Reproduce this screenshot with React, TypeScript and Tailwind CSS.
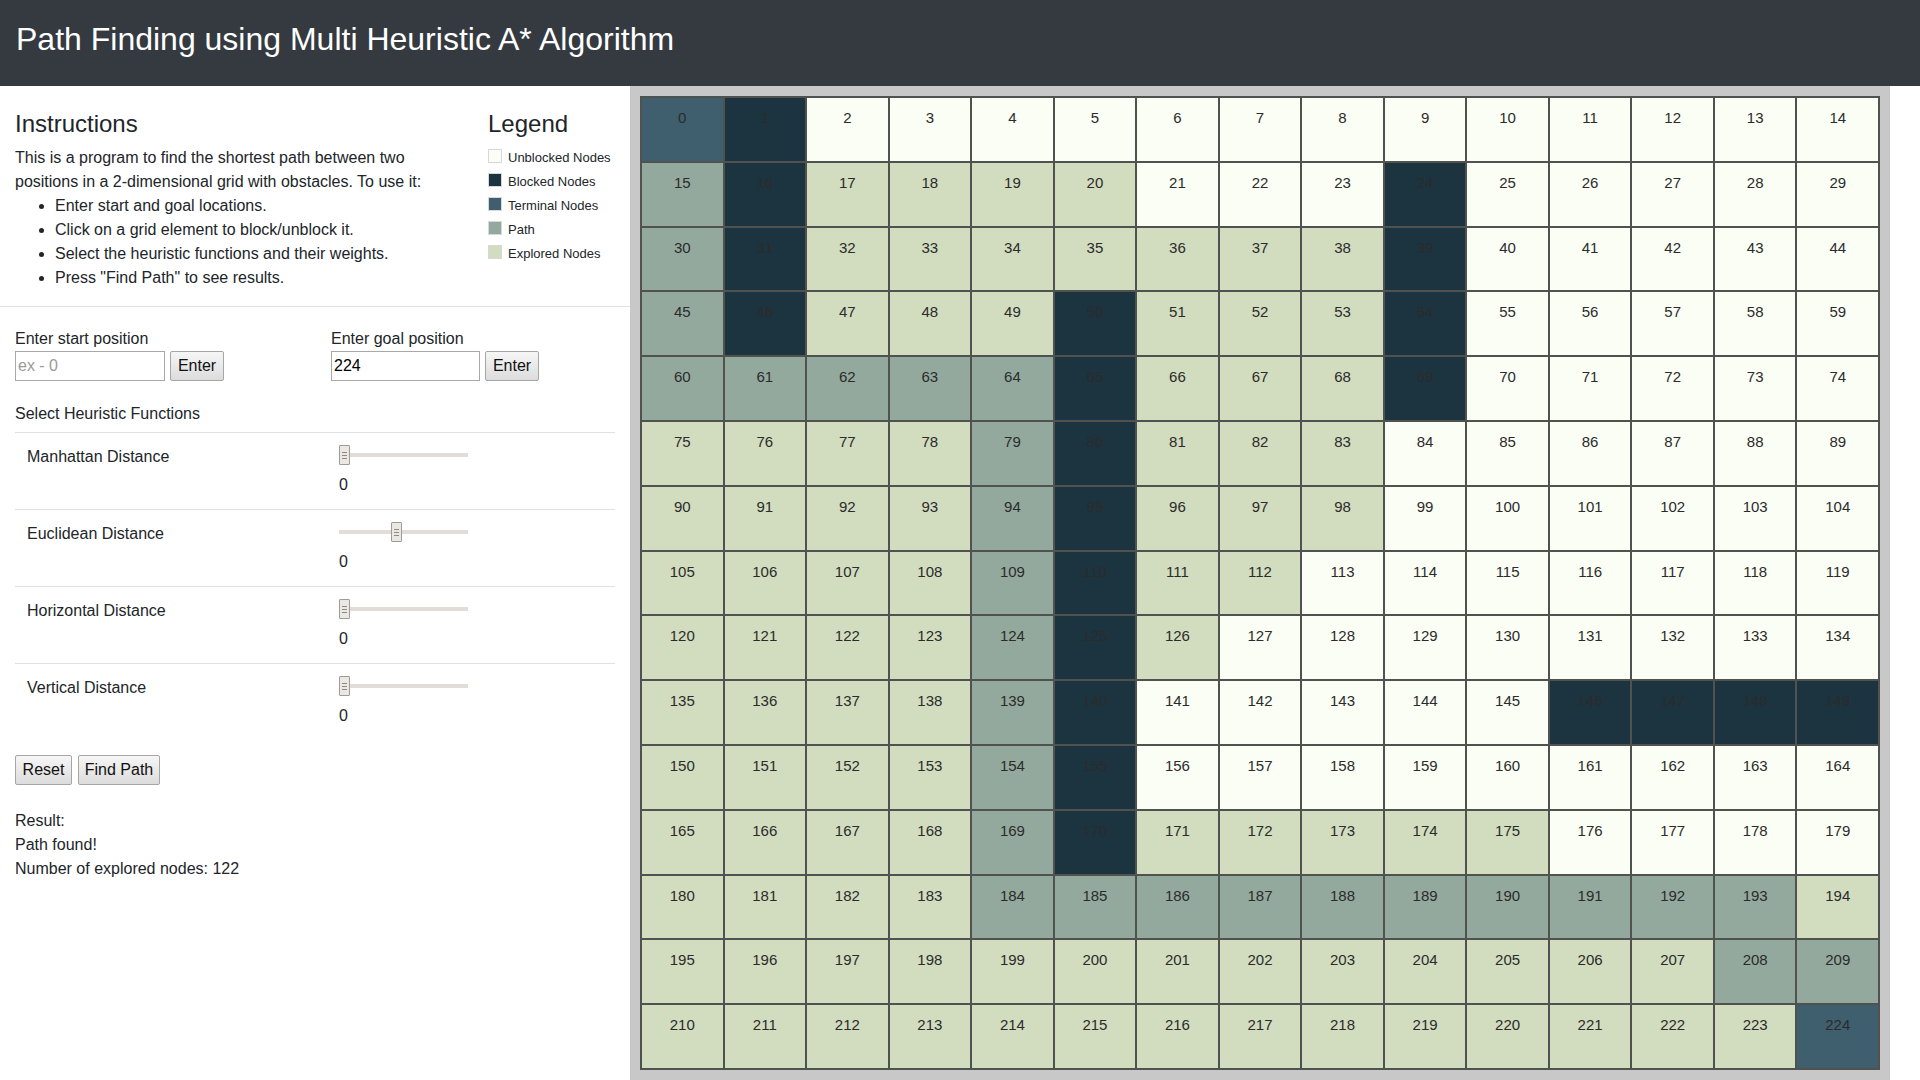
import React from 'react';

// grid layout, one string per row of 15 cells
// t = terminal, b = blocked, p = path, e = explored, u = unblocked
const ROWS: string[] = [
  'tbuuuuuuuuuuuuu',
  'pbeeeeuuubuuuuu',
  'pbeeeeeeebuuuuu',
  'pbeeebeeebuuuuu',
  'pppppbeeebuuuuu',
  'eeeepbeeeuuuuuu',
  'eeeepbeeeuuuuuu',
  'eeeepbeeuuuuuuu',
  'eeeepbeuuuuuuuu',
  'eeeepbuuuuubbbb',
  'eeeepbuuuuuuuuu',
  'eeeepbeeeeeuuuu',
  'eeeeppppppppppe',
  'eeeeeeeeeeeeepp',
  'eeeeeeeeeeeeeet',
];

const cellBg: Record<string, string> = {
  t: 'bg-[#3f5e6e]',
  b: 'bg-[#1b3440]',
  p: 'bg-[#93a99d]',
  e: 'bg-[#d2dcbf]',
  u: 'bg-[#fbfef5]',
};

const legend = [
  { label: 'Unblocked Nodes', bg: 'bg-[#fbfef5]' },
  { label: 'Blocked Nodes', bg: 'bg-[#1b3440]' },
  { label: 'Terminal Nodes', bg: 'bg-[#3f5e6e]' },
  { label: 'Path', bg: 'bg-[#93a99d]' },
  { label: 'Explored Nodes', bg: 'bg-[#d2dcbf]' },
];

const heuristics = [
  { name: 'Manhattan Distance', handle: 'left-0' },
  { name: 'Euclidean Distance', handle: 'left-[52px]' },
  { name: 'Horizontal Distance', handle: 'left-0' },
  { name: 'Vertical Distance', handle: 'left-0' },
];

const btn =
  'h-[30px] border border-[#a6a6a6] rounded-[2px] bg-linear-to-b from-[#f6f6f6] to-[#dcdcdc] text-[16px] text-[#111] leading-none';

const Slider: React.FC<{ handle: string }> = ({ handle }) => (
  <div className="relative w-[129px] h-[28px]">
    <div className="absolute left-0 right-0 top-[8px] h-[4px] bg-[#e2ddd8]" />
    <div
      className={`absolute top-0 ${handle} w-[11px] h-[20px] bg-[#ebe8e4] border border-[#9f9c98] rounded-[1px] flex flex-col items-center justify-center gap-[2px]`}
    >
      <span className="block w-[5px] h-px bg-[#8d8a86]" />
      <span className="block w-[5px] h-px bg-[#8d8a86]" />
      <span className="block w-[5px] h-px bg-[#8d8a86]" />
    </div>
  </div>
);

const App: React.FC = () => {
  return (
    <div className="min-h-[1080px] bg-white text-[#212529] font-['Liberation_Sans',Arial,sans-serif] text-[16px]">
      {/* Header */}
      <header className="h-[86px] bg-[#343a40] px-[16px] pt-[20px]">
        <h1 className="text-[32px] leading-[38px] text-white">Path Finding using Multi Heuristic A* Algorithm</h1>
      </header>

      <div className="flex">
        {/* Controls */}
        <div className="w-[630px] shrink-0">
          <div className="flex pt-[23px]">
            <div className="w-[472px] px-[15px]">
              <h4 className="text-[24px] leading-[29px] mb-[8px]">Instructions</h4>
              <p className="leading-6">
                This is a program to find the shortest path between two
                <br />
                positions in a 2-dimensional grid with obstacles. To use it:
              </p>
              <ul className="list-disc pl-[40px] leading-6 mb-[16px]">
                <li>Enter start and goal locations.</li>
                <li>Click on a grid element to block/unblock it.</li>
                <li>Select the heuristic functions and their weights.</li>
                <li>Press "Find Path" to see results.</li>
              </ul>
            </div>
            <div className="pl-[16px]">
              <h4 className="text-[24px] leading-[29px] mb-[8px]">Legend</h4>
              {legend.map((l) => (
                <div key={l.label} className="flex items-start h-[24px]">
                  <span className={`mt-[3px] w-[14px] h-[14px] border border-[#d6d9dc] ${l.bg}`} />
                  <span className="ml-[6px] text-[13px] leading-[24px]">{l.label}</span>
                </div>
              ))}
            </div>
          </div>

          <div className="border-t border-[#dee2e6]" />

          <div className="pt-[20px]">
            <div className="flex">
              <div className="w-[316px] pl-[15px]">
                <div className="leading-6">Enter start position</div>
                <div className="flex gap-[5px]">
                  <input
                    className="w-[150px] h-[30px] border border-[#a9a9a9] px-[2px] text-[16px] placeholder:text-[#9a9a9a] outline-none"
                    placeholder="ex - 0"
                  />
                  <button className={`${btn} w-[54px]`}>Enter</button>
                </div>
              </div>
              <div className="pl-[15px]">
                <div className="leading-6">Enter goal position</div>
                <div className="flex gap-[5px]">
                  <input
                    className="w-[149px] h-[30px] border border-[#a9a9a9] px-[2px] text-[16px] text-black outline-none"
                    defaultValue="224"
                  />
                  <button className={`${btn} w-[54px]`}>Enter</button>
                </div>
              </div>
            </div>

            <div className="pl-[15px] pr-[15px]">
              <div className="mt-[21px] mb-[6px] leading-6">Select Heuristic Functions</div>
              <div className="w-[600px]">
                {heuristics.map((h) => (
                  <div key={h.name} className="flex border-t border-[#dee2e6] py-[12px]">
                    <div className="w-[312px] px-[12px] leading-6">{h.name}</div>
                    <div className="px-[12px]">
                      <Slider handle={h.handle} />
                      <div className="leading-6">0</div>
                    </div>
                  </div>
                ))}
              </div>

              <div className="flex gap-[6px] mt-[15px]">
                <button className={`${btn} w-[57px]`}>Reset</button>
                <button className={`${btn} w-[82px]`}>Find Path</button>
              </div>

              <div className="mt-[24px] leading-6">
                <div>Result:</div>
                <div>Path found!</div>
                <div>Number of explored nodes: 122</div>
              </div>
            </div>
          </div>
        </div>

        {/* Grid */}
        <div className="w-[1260px] shrink-0 bg-[#c8c8c8] p-[10px]">
          <div className="w-[1240px] h-[974px] grid grid-cols-[repeat(15,minmax(0,1fr))] grid-rows-[repeat(15,minmax(0,1fr))] gap-[2px] p-[2px] bg-[#4f524f]">
            {ROWS.map((row, r) =>
              row.split('').map((k, c) => (
                <div
                  key={r * 15 + c}
                  className={`${cellBg[k]} text-center text-[15px] leading-[17px] pt-[11px] text-[#2b2b2b]`}
                >
                  {r * 15 + c}
                </div>
              ))
            )}
          </div>
        </div>
      </div>
    </div>
  );
};

export default App;
